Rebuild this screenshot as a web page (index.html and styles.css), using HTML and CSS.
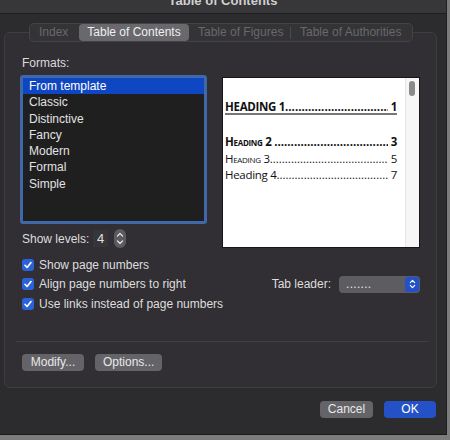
FILE: index.html
```html
<!DOCTYPE html>
<html>
<head>
<meta charset="utf-8">
<link rel="stylesheet" href="styles.css">
</head>
<body>
<div class="window">
  <div class="titlebar"><span class="title">Table of Contents</span></div>
  <div class="tabs">
    <span class="tab disabled t-index">Index</span>
    <span class="tab selected t-toc">Table of Contents</span>
    <span class="tab disabled t-fig">Table of Figures</span>
    <span class="tab-sep"></span>
    <span class="tab disabled t-auth">Table of Authorities</span>
  </div>
  <div class="group">
    <div class="top-row">
      <div class="left-col">
        <div class="label">Formats:</div>
        <div class="listbox">
          <div class="item sel">From template</div>
          <div class="item">Classic</div>
          <div class="item">Distinctive</div>
          <div class="item">Fancy</div>
          <div class="item">Modern</div>
          <div class="item">Formal</div>
          <div class="item">Simple</div>
        </div>
        <div class="levels">
          <span class="levels-label">Show levels:</span>
          <span class="levels-value">4</span>
          <span class="stepper">
            <svg width="12" height="19" viewBox="0 0 12 19">
              <path d="M3.5 7 L6 4.5 L8.5 7" fill="none" stroke="#e6e6e6" stroke-width="1.2" stroke-linecap="round" stroke-linejoin="round"/>
              <path d="M3.5 12 L6 14.5 L8.5 12" fill="none" stroke="#e6e6e6" stroke-width="1.2" stroke-linecap="round" stroke-linejoin="round"/>
            </svg>
          </span>
        </div>
      </div>
      <div class="preview">
        <div class="page">
          <div class="toc-line h1"><span class="txt">HEADING 1</span><span class="dots">........................................................................</span><span class="num">&nbsp;1</span></div>
          <div class="toc-line h2"><span class="txt">Heading 2&nbsp;</span><span class="dots">........................................................................</span><span class="num">&nbsp;3</span></div>
          <div class="toc-line h3"><span class="txt">Heading 3</span><span class="dots">........................................................................</span><span class="num">&nbsp;5</span></div>
          <div class="toc-line h4"><span class="txt">Heading 4</span><span class="dots">........................................................................</span><span class="num">&nbsp;7</span></div>
        </div>
        <div class="scrollbar"><div class="thumb"></div></div>
      </div>
    </div>
    <div class="checks">
      <div class="check-row"><span class="cb"><svg width="12" height="12" viewBox="0 0 12 12"><path d="M3 6.3 L5.1 8.5 L9 3.6" fill="none" stroke="#fff" stroke-width="1.6" stroke-linecap="round" stroke-linejoin="round"/></svg></span><span>Show page numbers</span></div>
      <div class="check-row"><span class="cb"><svg width="12" height="12" viewBox="0 0 12 12"><path d="M3 6.3 L5.1 8.5 L9 3.6" fill="none" stroke="#fff" stroke-width="1.6" stroke-linecap="round" stroke-linejoin="round"/></svg></span><span>Align page numbers to right</span>
        <span class="leader">
          <span class="leader-label">Tab leader:</span>
          <span class="popup"><span class="popup-text">.......</span><span class="popup-cap"><svg width="13" height="14" viewBox="0 0 13 14"><path d="M4.3 5.6 L6.5 3.4 L8.7 5.6" fill="none" stroke="#fff" stroke-width="1.2" stroke-linecap="round" stroke-linejoin="round"/><path d="M4.3 8.4 L6.5 10.6 L8.7 8.4" fill="none" stroke="#fff" stroke-width="1.2" stroke-linecap="round" stroke-linejoin="round"/></svg></span></span>
        </span>
      </div>
      <div class="check-row"><span class="cb"><svg width="12" height="12" viewBox="0 0 12 12"><path d="M3 6.3 L5.1 8.5 L9 3.6" fill="none" stroke="#fff" stroke-width="1.6" stroke-linecap="round" stroke-linejoin="round"/></svg></span><span>Use links instead of page numbers</span></div>
    </div>
    <div class="sep"></div>
    <div class="group-buttons">
      <span class="btn">Modify...</span>
      <span class="btn">Options...</span>
    </div>
  </div>
  <div class="footer">
    <span class="btn wide">Cancel</span>
    <span class="btn wide primary">OK</span>
  </div>
</div>
</body>
</html>
```
FILE: styles.css
```css
* { box-sizing: border-box; }
html, body { margin: 0; padding: 0; }
body {
  width: 450px;
  height: 440px;
  background: #7c7c7c;
  font-family: "Liberation Sans", Arial, sans-serif;
  font-size: 12px;
  color: #dedede;
  overflow: hidden;
}
.window {
  width: 447px;
  height: 435px;
  background: #2c2b2e;
  border-right: 1px solid #1f1f21;
  border-bottom: 1px solid #1a1a1b;
}
.titlebar {
  height: 14px;
  background: #373639;
  border-bottom: 1px solid #1e1e20;
  overflow: hidden;
  text-align: center;
}
.title {
  display: block;
  margin-top: -7px;
  font-weight: bold;
  font-size: 13px;
  color: #cfcfcf;
  line-height: 16px;
}
.tabs {
  position: relative;
  z-index: 2;
  margin: 9px 0 0 29px;
  width: 384px;
  height: 19px;
  background: #343336;
  border: 1px solid #434245;
  border-radius: 5px;
  display: flex;
  align-items: center;
  font-size: 12px;
}
.tab { line-height: 17px; padding: 0 9px; white-space: nowrap; }
.tab.disabled { color: #69686c; }
.t-index { width: 49px; padding-left: 9px; }
.tab.selected {
  background: #69686c;
  color: #f0f0f0;
  border-radius: 4px;
  width: 110px;
  height: 17px;
  text-align: center;
  padding: 0;
}
.t-fig { padding-left: 9px; width: 101px; }
.tab-sep { width: 1px; height: 12px; background: #4a494c; }
.t-auth { padding-left: 9px; }
.group {
  margin: -10px 0 0 4px;
  width: 433px;
  height: 356px;
  background: #312f33;
  border: 1px solid #3e3d41;
  border-radius: 6px;
  padding: 23px 16px 0 15px;
}
.top-row { display: flex; align-items: flex-start; }
.left-col { width: 187px; }
.label { line-height: 15px; padding-left: 2px; color: #dcdcdc; }
.listbox {
  margin-top: 4px;
  height: 149px;
  border: 3px solid #3e68a8;
  border-radius: 3px;
  background: #1f1f20;
}
.item {
  height: 16.3px;
  line-height: 16.3px;
  padding-left: 6px;
  color: #e2e2e2;
}
.item.sel { background: #0f47c2; color: #fff; }
.levels {
  display: flex;
  align-items: center;
  height: 19px;
  margin-top: 5px;
  padding-left: 2px;
}
.levels-label { width: 71px; }
.levels-value {
  width: 15px;
  height: 17px;
  line-height: 17px;
  background: #363538;
  text-align: center;
  font-size: 13px;
  color: #e0e0e0;
}
.stepper {
  margin-left: 6px;
  width: 12px;
  height: 19px;
  background: #5b5a5e;
  border-radius: 6px;
  display: flex;
}
.preview {
  margin-top: 21px;
  margin-left: 15px;
  width: 198px;
  height: 171px;
  background: #fff;
  border: 1px solid #161616;
  display: flex;
}
.page {
  flex: 1;
  min-width: 0;
  overflow: hidden;
  padding: 21px 8px 0 2px;
  font-family: "Open Sans", "Noto Sans", sans-serif;
  color: #111;
  font-size: 11.5px;
  letter-spacing: -0.3px;
}
.toc-line {
  display: flex;
  white-space: nowrap;
  line-height: 16px;
  height: 16px;
}
.txt, .num { flex: none; }
.dots { flex: 1; overflow: hidden; min-width: 0; letter-spacing: 0; }
.h1 {
  font-weight: bold;
  text-decoration: underline;
  text-decoration-thickness: 2px;
  text-decoration-color: #777;
  text-underline-offset: 2px;
  margin-bottom: 19px;
}
.h2 { font-weight: bold; font-variant: small-caps; margin-bottom: 1px; }
.h3 { font-variant: small-caps; }
.scrollbar {
  flex: none;
  width: 14px;
  background: #f6f6f6;
  border-left: 1px solid #e6e6e6;
  padding: 3px 0 0 3px;
}
.thumb {
  width: 6px;
  height: 15px;
  border-radius: 3px;
  background: #8a8a8a;
}
.checks { margin-top: 7px; padding-left: 2px; }
.check-row {
  display: flex;
  align-items: center;
  height: 19.5px;
}
.cb {
  width: 12px;
  height: 12px;
  border-radius: 3px;
  background: #2b62d9;
  margin-right: 5px;
  display: flex;
}
.leader {
  margin-left: auto;
  display: flex;
  align-items: center;
}
.leader-label { margin-right: 8px; }
.popup {
  width: 81px;
  height: 17px;
  background: #5d5c60;
  border-radius: 4px;
  display: flex;
  align-items: center;
  justify-content: space-between;
  padding: 0 1px 0 7px;
}
.popup-text { color: #e6e6e6; letter-spacing: 0.3px; }
.popup-cap {
  width: 14px;
  height: 15px;
  background: #2351c9;
  border-radius: 3px;
  display: flex;
  align-items: center;
  justify-content: center;
}
.sep {
  margin: 27px 0 0 -4px;
  width: 412px;
  height: 1px;
  background: #413f43;
}
.group-buttons {
  display: flex;
  gap: 11px;
  margin-top: 12px;
  padding-left: 2px;
}
.btn {
  display: inline-block;
  height: 17px;
  line-height: 17px;
  padding: 0 8px;
  background: #646367;
  border-radius: 4px;
  color: #e8e8e8;
  text-align: center;
}
.group-buttons .btn:first-child { width: 62px; }
.group-buttons .btn:last-child { width: 67px; }
.footer {
  display: flex;
  justify-content: flex-end;
  gap: 11px;
  margin-top: 13px;
  padding-right: 10px;
}
.btn.wide { width: 53px; padding: 0; }
.btn.primary { background: #2452c6; color: #fff; width: 52px; }
```
